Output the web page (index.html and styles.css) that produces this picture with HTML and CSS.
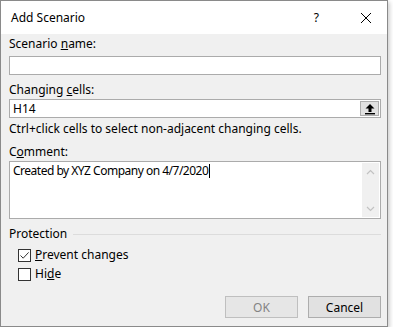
FILE: index.html
```html
<!DOCTYPE html>
<html lang="en">
<head>
    <meta charset="UTF-8">
    <meta name="viewport" content="width=device-width, initial-scale=1.0">
    <title>Add Scenario</title>
    <link rel="stylesheet" href="styles.css">
</head>
<body>
<div class="dialog">
    <div class="titlebar">
        <span class="title">Add Scenario</span>
        <span class="help">?</span>
        <svg class="close" width="12" height="12" viewBox="0 0 12 12">
            <path d="M1 1 L11 11 M11 1 L1 11" stroke="#000" stroke-width="1" fill="none"/>
        </svg>
    </div>
    <div class="content">
        <div class="label first">Scenario <u>n</u>ame:</div>
        <div class="textbox"></div>

        <div class="label">Changing <u>c</u>ells:</div>
        <div class="textbox with-button">
            <span class="value">H14</span>
            <span class="ref-btn">
                <svg width="12" height="12" viewBox="0 0 12 12">
                    <path d="M6 1 L10.5 5.5 L7.5 5.5 L7.5 9 L4.5 9 L4.5 5.5 L1.5 5.5 Z" fill="#000"/>
                    <rect x="1" y="10" width="10" height="1.4" fill="#000"/>
                </svg>
            </span>
        </div>
        <div class="hint">Ctrl+click cells to select non-adjacent changing cells.</div>

        <div class="label">C<u>o</u>mment:</div>
        <div class="textarea">
            <div class="text">Created by XYZ Company on 4/7/2020<span class="caret"></span></div>
            <div class="scrollbar">
                <svg width="9" height="6" viewBox="0 0 9 6"><path d="M1 5 L4.5 1.5 L8 5" stroke="#c2c2c2" stroke-width="1.2" fill="none"/></svg>
                <svg width="9" height="6" viewBox="0 0 9 6"><path d="M1 1 L4.5 4.5 L8 1" stroke="#c2c2c2" stroke-width="1.2" fill="none"/></svg>
            </div>
        </div>

        <div class="group-title">
            <span>Protection</span>
            <span class="rule"></span>
        </div>
        <div class="check-row">
            <span class="checkbox">
                <svg width="11" height="11" viewBox="0 0 11 11"><path d="M1.5 5.5 L4.2 8.2 L9.6 2.4" stroke="#333" stroke-width="1" fill="none"/></svg>
            </span>
            <span><u>P</u>revent changes</span>
        </div>
        <div class="check-row">
            <span class="checkbox"></span>
            <span>Hi<u>d</u>e</span>
        </div>

        <div class="buttons">
            <span class="btn disabled">OK</span>
            <span class="btn">Cancel</span>
        </div>
    </div>
</div>
</body>
</html>
```

FILE: styles.css
```css
body {
    margin: 0;
    padding: 0;
    background: #fff;
    font-family: "Segoe UI", "Noto Sans", Arial, sans-serif;
    font-size: 12px;
    color: #000;
}

.dialog {
    width: 386px;
    height: 325px;
    border: 1px solid #8a8a8a;
    background: #f0f0f0;
    box-shadow: 2px 2px 4px rgba(0, 0, 0, 0.18);
}

.titlebar {
    height: 33px;
    background: #fff;
    display: flex;
    align-items: center;
}

.title {
    margin-left: 10px;
    flex: 1;
}

.help {
    margin-right: 41px;
}

.close {
    margin-right: 15px;
}

.content {
    padding: 2px 6px 0 8px;
}

.label {
    line-height: 16px;
    height: 16px;
    margin-top: 7px;
    margin-bottom: 1px;
}

.label.first {
    margin-top: 0;
    margin-bottom: 4px;
}

.textbox {
    height: 17px;
    border: 1px solid #ababab;
    background: #fff;
    display: flex;
    align-items: center;
}

.value {
    flex: 1;
    padding-left: 3px;
}

.ref-btn {
    width: 19px;
    height: 15px;
    margin-right: 1px;
    background: #e1e1e1;
    border: 1px solid #adadad;
    box-sizing: border-box;
    display: flex;
    align-items: center;
    justify-content: center;
}

.hint {
    line-height: 16px;
    margin-top: 3px;
}

.textarea {
    height: 56px;
    border: 1px solid #ababab;
    background: #fff;
    display: flex;
}

.textarea .text {
    flex: 1;
    padding: 1px 3px;
    line-height: 16px;
    letter-spacing: -0.5px;
}

.caret {
    display: inline-block;
    width: 1px;
    height: 14px;
    margin-left: 1px;
    background: #000;
    vertical-align: -3px;
}

.scrollbar {
    width: 17px;
    margin: 1px;
    background: #f0f0f0;
    display: flex;
    flex-direction: column;
    align-items: center;
    justify-content: space-between;
    padding: 6px 0 5px;
    box-sizing: border-box;
}

.group-title {
    display: flex;
    align-items: center;
    margin-top: 7px;
    line-height: 16px;
}

.group-title .rule {
    flex: 1;
    height: 1px;
    background: #dcdcdc;
    margin-left: 6px;
}

.check-row {
    display: flex;
    align-items: center;
    margin-top: 5px;
    line-height: 16px;
    padding-left: 9px;
}

.check-row + .check-row {
    margin-top: 3px;
}

.checkbox {
    width: 13px;
    height: 13px;
    border: 1px solid #333;
    box-sizing: border-box;
    background: #fff;
    margin-right: 4px;
    display: flex;
    align-items: center;
    justify-content: center;
}

.buttons {
    display: flex;
    justify-content: flex-end;
    gap: 10px;
    margin-top: 14px;
}

.btn {
    width: 73px;
    height: 22px;
    box-sizing: border-box;
    border: 1px solid #adadad;
    background: #e1e1e1;
    display: flex;
    align-items: center;
    justify-content: center;
}

.btn.disabled {
    color: #838383;
    border-color: #bfbfbf;
    background: #e6e6e6;
}
```
